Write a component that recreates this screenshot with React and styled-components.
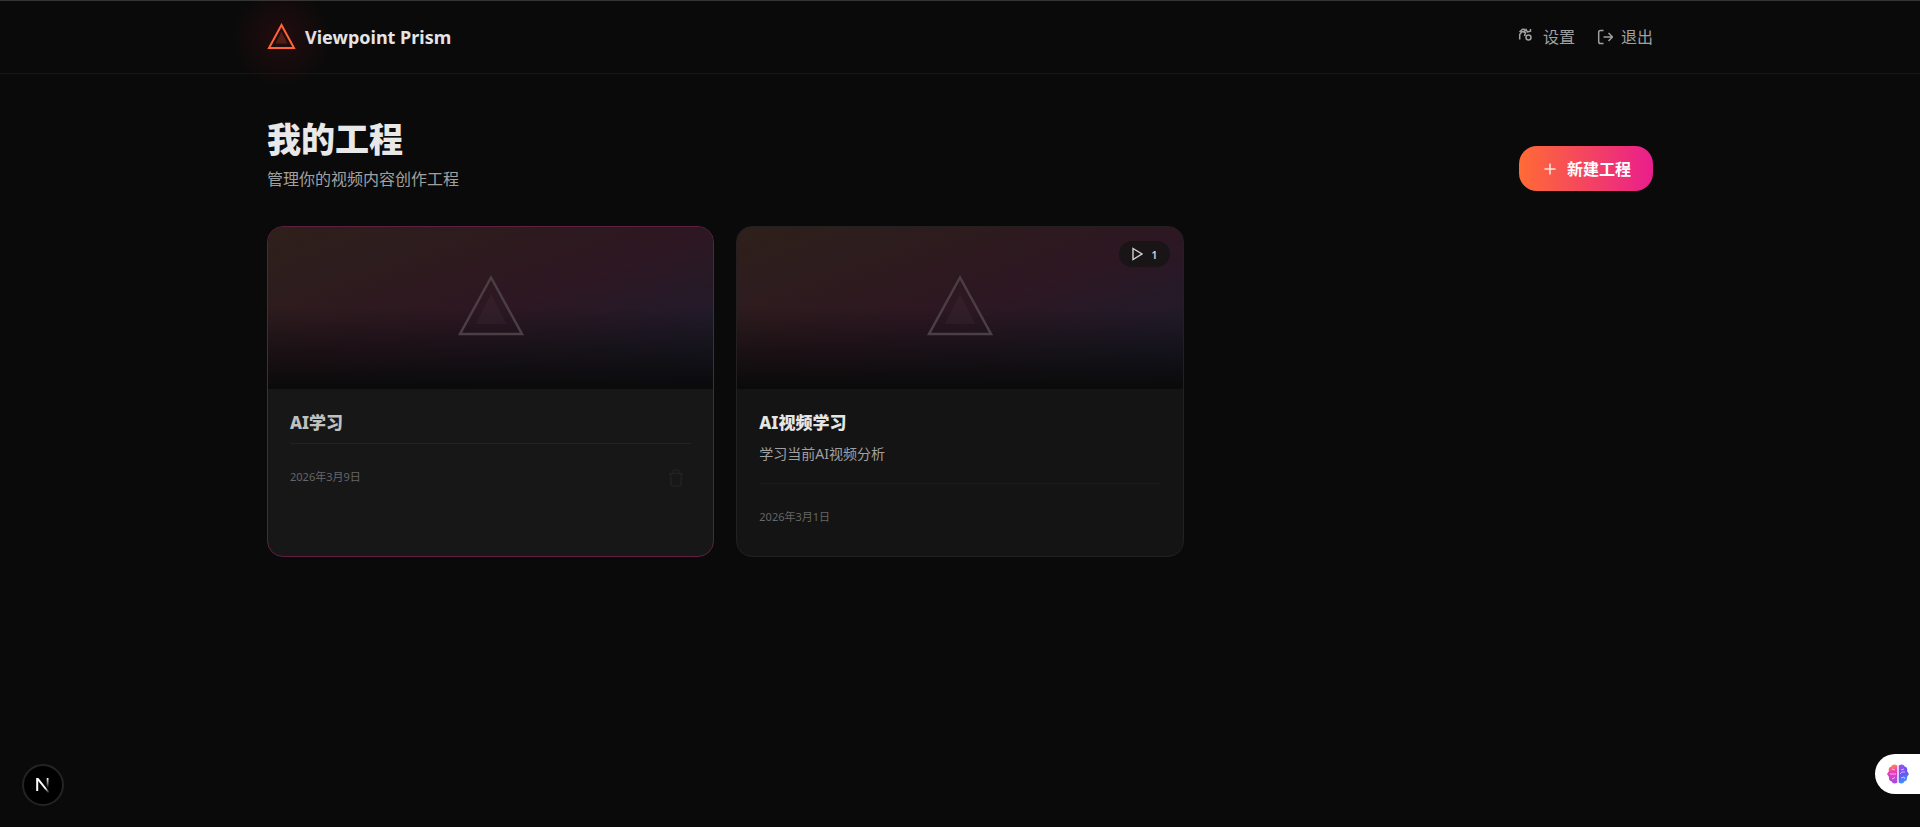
import React from "react";
import styled, { createGlobalStyle, css } from "styled-components";

const Global = createGlobalStyle`
  * { box-sizing: border-box; }
  body {
    margin: 0;
    background: #0a0a0a;
    color: #e8e8e8;
    font-family: "Noto Sans", "Noto Sans CJK SC", sans-serif;
    font-size: 16px;
  }
  h1, h2, p { margin: 0; }
  svg { display: block; flex: none; }
`;

const container = css`
  width: 100%;
  max-width: 1434px;
  margin: 0 auto;
  padding-left: 24px;
  padding-right: 24px;
`;

const Header = styled.header`
  border-top: 1px solid #333534;
  border-bottom: 1px solid #161616;
`;

const HeaderInner = styled.div`
  ${container}
  height: 72px;
  display: flex;
  align-items: center;
  justify-content: space-between;
`;

const Brand = styled.a`
  display: flex;
  align-items: center;
  gap: 9px;
  color: #e5e5e5;
  text-decoration: none;
  font-size: 18px;
  font-weight: 700;
`;

const LogoMark = styled.span`
  position: relative;

  &::before {
    content: "";
    position: absolute;
    inset: -36px;
    background: radial-gradient(closest-side, rgba(255, 30, 60, 0.1), rgba(255, 30, 60, 0.05) 50%, transparent);
    pointer-events: none;
  }
`;

const Nav = styled.nav`
  display: flex;
  gap: 22px;
`;

const NavButton = styled.button`
  display: flex;
  align-items: center;
  gap: 8px;
  padding: 0;
  border: 0;
  background: none;
  color: #a0a0a0;
  font: inherit;
  font-size: 16px;
  line-height: 24px;
`;

const Main = styled.main`
  ${container}
  padding-top: 43px;
  padding-bottom: 43px;
`;

const PageHead = styled.div`
  display: flex;
  justify-content: space-between;
  align-items: flex-end;
  margin-bottom: 35px;
`;

const Title = styled.h1`
  font-size: 34px;
  line-height: 44px;
  font-weight: 800;
`;

const Subtitle = styled.p`
  margin-top: 7px;
  color: #a0a0a0;
  font-size: 16px;
  line-height: 23px;
`;

const CreateButton = styled.button`
  display: flex;
  align-items: center;
  gap: 8px;
  height: 45px;
  padding: 0 22px;
  border: 0;
  border-radius: 18px;
  background: linear-gradient(90deg, #ff6b35, #e91e8c);
  color: #fff;
  font: inherit;
  font-size: 16px;
  line-height: 22px;
  font-weight: 700;
`;

const Grid = styled.div`
  display: grid;
  grid-template-columns: repeat(3, 1fr);
  gap: 22px;
`;

const Card = styled.article`
  overflow: hidden;
  border: 1px solid ${(p) => (p.$active ? "#5f2040" : "#242021")};
  border-radius: 16px;
  background: ${(p) => (p.$active ? "#171717" : "#141414")};
`;

const Thumb = styled.div`
  position: relative;
  height: 162px;
  display: flex;
  align-items: flex-start;
  justify-content: center;
  padding-top: 46px;
  background:
    linear-gradient(to bottom, transparent 50%, #0a0a0a),
    linear-gradient(to bottom right, #2e201a, #2d1722 50%, #1a1d30);
`;

const Badge = styled.span`
  position: absolute;
  top: 14px;
  right: 13px;
  display: flex;
  align-items: center;
  gap: 7px;
  height: 26px;
  padding: 0 12px;
  border-radius: 13px;
  background: #191516;
  color: #d0d0d0;
  font-size: 11px;
  font-weight: 600;
`;

const CardBody = styled.div`
  padding: 22px 22px 28px;
`;

const CardTitle = styled.h2`
  margin-bottom: 8px;
  color: ${(p) => (p.$active ? "#c0c0c0" : "#e5e5e5")};
  font-size: 17px;
  line-height: 24px;
  font-weight: 800;
`;

const CardText = styled.p`
  margin-bottom: 18px;
  color: #a0a0a0;
  font-size: 14px;
  line-height: 22px;
`;

const CardFoot = styled.div`
  display: flex;
  align-items: center;
  justify-content: space-between;
  padding: 22px 7px 0 0;
  border-top: 1px solid ${(p) => (p.$active ? "#222" : "#1b1b1b")};
  color: #666;
  font-size: 11px;
  line-height: 22px;
`;

const IconButton = styled.button`
  padding: 2px 0 0;
  border: 0;
  background: none;
  color: #222;
`;

const DevButton = styled.button`
  position: fixed;
  left: 22px;
  bottom: 21px;
  width: 42px;
  height: 42px;
  padding: 0;
  display: grid;
  place-items: center;
  border: 2px solid #242424;
  border-radius: 50%;
  background: #000;
  color: #fff;
`;

const AssistButton = styled.button`
  position: fixed;
  right: 0;
  bottom: 33px;
  width: 45px;
  height: 40px;
  padding: 0 0 0 12px;
  border: 0;
  border-radius: 20px 0 0 20px;
  background: #fff;
`;

const Logo = () => (
  <svg width="29" height="29" viewBox="0 0 29 29" fill="none">
    <path d="M14.500 2 27 25H2Z" stroke="#ff6b35" strokeWidth="2" />
    <path d="M14.500 8.500 20.500 20.500H8.500Z" fill="#ff6b35" fillOpacity=".22" />
  </svg>
);

const Prism = () => (
  <svg width="66" height="64" viewBox="0 0 66 64" fill="none">
    <path d="M33 4.500 64 61H2Z" stroke="#4c3e45" strokeWidth="2.500" />
    <path d="M33 21 48.500 51H17.500Z" fill="#fff" fillOpacity=".03" />
  </svg>
);

const SettingsIcon = () => (
  <svg width="18" height="18" viewBox="0 0 18 18" fill="none" stroke="currentColor" strokeWidth="1.500">
    <circle cx="11.500" cy="9.500" r="2.500" />
    <path d="M2.700 11.500V6.500L5 3.500 8.500 4.500 7.500 8M2.500 4 5.500 1.200 8 1.500M6.500 4.500 9 1.500 10.500 4 13.500 3.200V1" />
  </svg>
);

const ExitIcon = () => (
  <svg width="16" height="16" viewBox="0 0 16 16" fill="none" stroke="currentColor" strokeWidth="1.500">
    <path d="M6.500 1.500H3.500Q1.700 1.500 1.700 3.300V12.700Q1.700 14.500 3.500 14.500H6.500M6.500 8H15.500M11.500 4 15.500 8 11.500 12" />
  </svg>
);

const PlusIcon = () => (
  <svg width="18" height="18" viewBox="0 0 18 18" stroke="#fff" strokeOpacity=".85" strokeWidth="1.500">
    <path d="M9 3.500V14.500M3.500 9H14.500" />
  </svg>
);

const PlayIcon = () => (
  <svg width="13" height="14" viewBox="0 0 13 14" fill="none" stroke="currentColor" strokeWidth="1.400">
    <path d="M2 1.500 11 7 2 12.500Z" />
  </svg>
);

const TrashIcon = () => (
  <svg width="16" height="18" viewBox="0 0 16 18" fill="none" stroke="currentColor" strokeWidth="1.500">
    <path d="M1 4.500H15M5 4V2Q5 1 6 1H10Q11 1 11 2V4M2.700 5 3.200 15.500Q3.300 17 5 17H11Q12.700 17 12.800 15.500L13.300 5" />
  </svg>
);

const DevIcon = () => (
  <svg width="18" height="20" viewBox="0 0 18 20" fill="none">
    <defs>
      <linearGradient id="dev-a" x1="11" y1="13" x2="15" y2="18" gradientUnits="userSpaceOnUse">
        <stop stopColor="#fff" />
        <stop offset="1" stopColor="#fff" stopOpacity="0" />
      </linearGradient>
      <linearGradient id="dev-b" x1="0" y1="3" x2="0" y2="13" gradientUnits="userSpaceOnUse">
        <stop stopColor="#fff" />
        <stop offset="1" stopColor="#fff" stopOpacity="0" />
      </linearGradient>
    </defs>
    <path d="M2.200 3H4.400L15.800 17.500 14.400 18.500 4.200 6V16H2.200Z" fill="url(#dev-a)" />
    <path d="M12.700 3H14.500V13H12.700Z" fill="url(#dev-b)" />
  </svg>
);

const BrainIcon = () => (
  <svg width="22" height="20" viewBox="0 0 22 20" fill="none">
    <defs>
      <linearGradient id="brain-l" x1="3" y1="0" x2="8" y2="20" gradientUnits="userSpaceOnUse">
        <stop stopColor="#ff9a3c" />
        <stop offset=".4" stopColor="#f03ab8" />
        <stop offset="1" stopColor="#9a4cf0" />
      </linearGradient>
      <linearGradient id="brain-r" x1="12" y1="2" x2="21" y2="18" gradientUnits="userSpaceOnUse">
        <stop stopColor="#9b4ff0" />
        <stop offset=".5" stopColor="#6a55f2" />
        <stop offset="1" stopColor="#2fa4ff" />
      </linearGradient>
    </defs>
    <path d="M10.300 1.500C8 -.3 5 .3 4.300 2.500 2 3 1.200 5 2 7L0 10 2 13C1.500 15 2.500 17 4.500 17.300 5.500 19.800 8.500 20 10.300 18.500Z" fill="url(#brain-l)" />
    <path d="M11.700 1.500C14 -.3 17 .3 17.700 2.500 20 3 20.800 5 20 7L22 10 20 13C20.500 15 19.500 17 17.500 17.300 16.500 19.800 13.500 20 11.700 18.500Z" fill="url(#brain-r)" />
    <path d="M3 10H9M5 5 8 6M5 15 8 13.500M14 6 17 5M13 10 15 8H18M14 14 17 13 18 15" stroke="#fff" strokeOpacity=".6" />
  </svg>
);

const projects = [
  { name: "AI学习", date: "2026年3月9日", active: true },
  { name: "AI视频学习", text: "学习当前AI视频分析", date: "2026年3月1日", videos: 1 },
];

export default function App() {
  return (
    <>
      <Global />
      <Header>
        <HeaderInner>
          <Brand href="#">
            <LogoMark><Logo /></LogoMark>
            Viewpoint Prism
          </Brand>
          <Nav>
            <NavButton><SettingsIcon />设置</NavButton>
            <NavButton><ExitIcon />退出</NavButton>
          </Nav>
        </HeaderInner>
      </Header>
      <Main>
        <PageHead>
          <div>
            <Title>我的工程</Title>
            <Subtitle>管理你的视频内容创作工程</Subtitle>
          </div>
          <CreateButton><PlusIcon />新建工程</CreateButton>
        </PageHead>
        <Grid>
          {projects.map((p) => (
            <Card key={p.name} $active={p.active}>
              <Thumb>
                <Prism />
                {p.videos && <Badge><PlayIcon />{p.videos}</Badge>}
              </Thumb>
              <CardBody>
                <CardTitle $active={p.active}>{p.name}</CardTitle>
                {p.text && <CardText>{p.text}</CardText>}
                <CardFoot $active={p.active}>
                  <time>{p.date}</time>
                  {p.active && <IconButton aria-label="删除"><TrashIcon /></IconButton>}
                </CardFoot>
              </CardBody>
            </Card>
          ))}
        </Grid>
      </Main>
      <DevButton aria-label="Next.js"><DevIcon /></DevButton>
      <AssistButton aria-label="AI"><BrainIcon /></AssistButton>
    </>
  );
}
